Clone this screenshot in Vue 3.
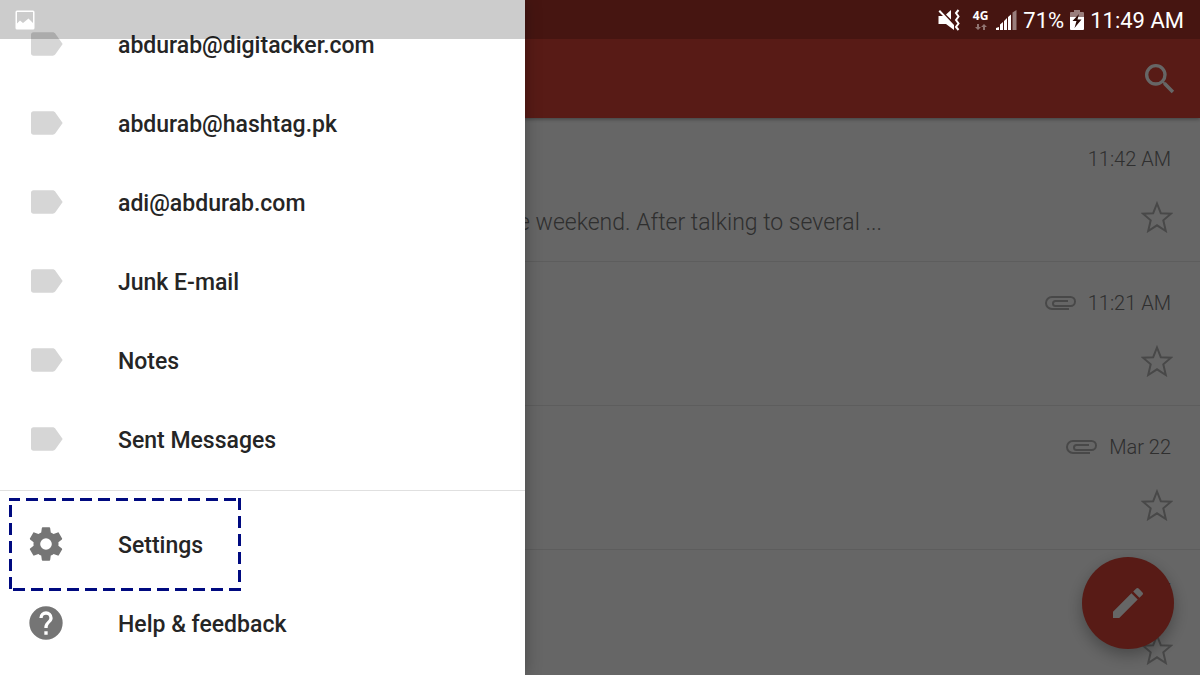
<script setup>
const labels = [
  'abdurab@digitacker.com',
  'abdurab@hashtag.pk',
  'adi@abdurab.com',
  'Junk E-mail',
  'Notes',
  'Sent Messages',
]

const mails = [
  { time: '11:42 AM', clip: false, snippet: 'the weekend. After talking to several ...' },
  { time: '11:21 AM', clip: true, snippet: '' },
  { time: 'Mar 22', clip: true, snippet: '' },
  { time: 'Mar 17', clip: false, snippet: '' },
]
</script>

<template>
  <div class="screen">
    <main class="app">
      <header class="toolbar">
        <button class="icon-button" type="button" aria-label="Search">
          <svg class="icon" viewBox="0 0 24 24">
            <path d="M15.5 14h-.79l-.28-.27A6.47 6.47 0 0 0 16 9.5 6.5 6.5 0 1 0 9.5 16c1.61 0 3.09-.59 4.23-1.57l.27.28v.79l5 4.99L20.49 19l-4.99-5zm-6 0a4.5 4.5 0 1 1 0-9 4.5 4.5 0 0 1 0 9z" />
          </svg>
        </button>
      </header>

      <ul class="mails">
        <li v-for="mail in mails" :key="mail.time" class="mail">
          <div class="meta">
            <svg v-if="mail.clip" class="clip" viewBox="0 0 31 14">
              <path d="M24 13H7A6 6 0 0 1 7 1H25.5A4.5 4.5 0 0 1 25.5 10H10.500a2.500 2.500 0 0 1 0-5H23" />
            </svg>
            <time>{{ mail.time }}</time>
          </div>
          <div class="line">
            <p class="snippet">{{ mail.snippet }}</p>
            <button class="icon-button" type="button" aria-label="Star">
              <svg class="star" viewBox="0 0 32 32">
                <path d="M16 2.500L19.800 12.200L30 12.700L22.300 19.300L24.800 30L16 24.300L7.200 30L9.700 19.300L2 12.700L12.200 12.200Z" />
              </svg>
            </button>
          </div>
        </li>
      </ul>

      <button class="fab" type="button" aria-label="Compose">
        <svg class="icon" viewBox="0 0 24 24">
          <path d="M3 17.250V21h3.750L17.810 9.940l-3.750-3.750L3 17.250zM20.710 7.040a1 1 0 0 0 0-1.410l-2.340-2.340a1 1 0 0 0-1.410 0l-1.830 1.830 3.750 3.750 1.830-1.830z" />
        </svg>
      </button>
    </main>

    <div class="scrim"></div>

    <nav class="drawer" aria-label="Folders">
      <div class="group">
        <a v-for="label in labels" :key="label" href="#" class="item">
          <svg class="icon pale" viewBox="0 0 24 24">
            <path d="M17.630 5.840C17.270 5.330 16.670 5 16 5H4.500C3.600 5 3 5.600 3 6.500v11C3 18.400 3.600 19 4.500 19H16c.67 0 1.270-.33 1.630-.84L22 12l-4.370-6.160z" />
          </svg>
          <span>{{ label }}</span>
        </a>
      </div>
      <div class="group footer">
        <a href="#" class="item">
          <svg class="icon" viewBox="0 0 24 24">
            <path d="M19.430 12.980c.04-.32.07-.64.07-.98s-.03-.66-.07-.98l2.110-1.650c.19-.15.24-.42.12-.64l-2-3.460c-.12-.22-.39-.3-.61-.22l-2.490 1c-.52-.4-1.080-.73-1.690-.98l-.38-2.650C14.460 2.180 14.250 2 14 2h-4c-.25 0-.46.18-.49.42l-.38 2.650c-.61.25-1.170.59-1.690.98l-2.490-1c-.23-.09-.49 0-.61.22l-2 3.460c-.13.22-.07.49.12.64l2.110 1.650c-.04.32-.07.65-.07.98s.03.66.07.98l-2.110 1.650c-.19.15-.24.42-.12.64l2 3.460c.12.22.39.3.61.22l2.490-1c.52.4 1.080.73 1.690.98l.38 2.650c.03.24.24.42.49.42h4c.25 0 .46-.18.49-.42l.38-2.650c.61-.25 1.170-.59 1.690-.98l2.490 1c.23.09.49 0 .61-.22l2-3.460c.12-.22.07-.49-.12-.64l-2.110-1.650zM12 15.500a3.500 3.500 0 1 1 0-7 3.500 3.500 0 0 1 0 7z" />
          </svg>
          <span>Settings</span>
          <svg class="marker" viewBox="0 0 232 93">
            <path d="M0 1.500H227" stroke-dashoffset="1" />
            <path d="M230.500 0V85" />
            <path d="M232 91.500H4" />
            <path d="M1.500 91V7" />
          </svg>
        </a>
        <a href="#" class="item">
          <svg class="icon" viewBox="0 0 24 24">
            <path d="M12 2a10 10 0 1 0 0 20 10 10 0 0 0 0-20zm1 17h-2v-2h2v2zm2.070-7.750l-.9.92C13.450 12.900 13 13.500 13 15h-2v-.5c0-1.100.45-2.100 1.170-2.830l1.240-1.260c.37-.36.59-.86.59-1.410a2 2 0 1 0-4 0H8a4 4 0 1 1 8 0c0 .88-.36 1.680-.93 2.250z" />
          </svg>
          <span>Help &amp; feedback</span>
        </a>
      </div>
    </nav>

    <div class="status">
      <svg class="photo" viewBox="0 0 20 20">
        <path fill-rule="evenodd" d="M2 .5H18A1.500 1.500 0 0 1 19.500 2V18A1.500 1.500 0 0 1 18 19.500H2A1.500 1.500 0 0 1 .5 18V2A1.500 1.500 0 0 1 2 .5ZM2 2V13.500L5 10.500L8 13L13.500 8.500L18 13V2Z" />
      </svg>
      <span class="spacer"></span>
      <svg class="mute" viewBox="0 0 23 22">
        <path d="M2 1L16 16V21L8 15H.5V7H5L.5 2.500ZM8 5.500L13 1V10.500Z" />
        <path class="stroke" d="M20.500 1L18 4L20.500 7.500L18 11L20.500 14.500L18 18L20.500 21" />
      </svg>
      <span class="network">
        <span>4G</span>
        <svg class="arrows" viewBox="0 0 12 6">
          <path d="M2 0H4V3H6L3 6L0 3H2ZM8 6H10V3H12L9 0L6 3H8Z" />
        </svg>
      </span>
      <svg class="signal" viewBox="0 0 21 20">
        <path d="M0 20V18L3 17V20ZM4 20V14.500L7 12V20ZM8 20V11L11 8V20ZM12 20V7L15 4.500V20Z" />
        <path class="dim" d="M16.500 20V2.500L20.500 0V20Z" />
      </svg>
      <span class="percent">71%</span>
      <svg class="battery" viewBox="0 0 14 20">
        <path class="dim" d="M4 0H10V2H13Q14 2 14 3V7H0V3Q0 2 1 2H4Z" />
        <path d="M0 7H14V19Q14 20 13 20H1Q0 20 0 19Z" />
        <path class="bolt" d="M9 4L2.500 11H6.500L4.500 18L11.500 9.500H7.500Z" />
      </svg>
      <time class="clock">11:49 AM</time>
    </div>
  </div>
</template>

<style>
body {
  margin: 0;
}
</style>

<style scoped>
.screen {
  display: grid;
  grid-template: minmax(0, 1fr) / minmax(0, 1fr);
  height: 100vh;
  overflow: hidden;
  font-family: Roboto, "Liberation Sans", sans-serif;
}
.app,
.scrim,
.drawer,
.status {
  grid-area: 1 / 1;
}
button {
  border: 0;
  padding: 0;
  background: none;
  color: inherit;
}
svg {
  display: block;
  flex: none;
}
.icon {
  width: 40px;
  height: 40px;
  fill: currentColor;
}
.icon-button {
  display: block;
}

.app {
  position: relative;
  overflow: hidden;
  background: #fff;
}
.toolbar {
  position: relative;
  display: flex;
  justify-content: flex-end;
  align-items: center;
  box-sizing: border-box;
  height: 118px;
  padding: 39px 20px 0;
  background: #db4437;
  color: #fff;
  box-shadow: 0 1px 4px rgba(0, 0, 0, 0.4);
}
.mails {
  margin: 0;
  padding: 0;
  list-style: none;
}
.mail {
  box-sizing: border-box;
  height: 144px;
  padding: 28px 27px 0 498px;
  border-bottom: 1px solid #e8e8e8;
  color: #757575;
  font-weight: 300;
}
.meta {
  display: flex;
  justify-content: flex-end;
  align-items: center;
  gap: 12px;
  height: 26px;
  padding-right: 2px;
  font-size: 20px;
}
.clip {
  width: 31px;
  height: 14px;
  fill: none;
  stroke: #b4b4b4;
  stroke-width: 2;
}
.line {
  display: flex;
  justify-content: space-between;
  align-items: center;
  height: 38px;
  margin-top: 26px;
}
.snippet {
  margin: 0;
  padding-top: 12px;
  font-size: 23px;
  line-height: 26px;
  white-space: nowrap;
}
.star {
  width: 32px;
  height: 32px;
  fill: none;
  stroke: #b4b4b4;
  stroke-width: 2;
}
.fab {
  position: absolute;
  right: 26px;
  bottom: 26px;
  display: grid;
  place-items: center;
  width: 92px;
  height: 92px;
  border-radius: 50%;
  background: #db4437;
  color: #fff;
  box-shadow: 0 6px 16px rgba(0, 0, 0, 0.3);
}

.scrim {
  position: relative;
  background: rgba(0, 0, 0, 0.6);
}

.drawer {
  position: relative;
  justify-self: start;
  box-sizing: border-box;
  width: 525px;
  max-width: 100%;
  padding-top: 4px;
  background: #fff;
  box-shadow: 0 0 16px rgba(0, 0, 0, 0.3);
}
.footer {
  margin-top: 12px;
  padding-top: 13px;
  border-top: 1px solid #e0e0e0;
}
.item {
  position: relative;
  display: flex;
  align-items: center;
  gap: 52px;
  height: 79px;
  padding-left: 26px;
  color: #757575;
  text-decoration: none;
}
.item span {
  padding-top: 4px;
  color: #252525;
  font-size: 23px;
  font-weight: 500;
  line-height: 28px;
}
.pale {
  color: #d6d6d6;
}
.marker {
  position: absolute;
  top: -6px;
  left: 9px;
  width: 232px;
  height: 93px;
  fill: none;
  stroke: #000a80;
  stroke-width: 3;
  stroke-dasharray: 12 6;
}

.status {
  position: relative;
  display: flex;
  align-items: center;
  align-self: start;
  box-sizing: border-box;
  height: 39px;
  padding: 0 16px 0 15px;
  background: rgba(0, 0, 0, 0.2);
  color: #fff;
  font-size: 22px;
}
.status svg {
  fill: #fff;
}
.spacer {
  flex: 1;
}
.photo {
  width: 20px;
  height: 20px;
}
.mute {
  width: 23px;
  height: 22px;
  margin-right: 12px;
}
.mute .stroke {
  fill: none;
  stroke: #fff;
  stroke-width: 2;
}
.network {
  display: flex;
  flex-direction: column;
  align-items: center;
  gap: 2px;
  margin-right: 8px;
  font: 700 12px/12px "Open Sans", sans-serif;
}
.arrows {
  width: 12px;
  height: 6px;
  opacity: 0.4;
}
.signal {
  width: 21px;
  height: 20px;
  margin-right: 6px;
}
.status .dim {
  opacity: 0.45;
}
.percent,
.clock {
  padding-top: 2px;
}
.percent {
  margin-right: 6px;
}
.battery {
  width: 14px;
  height: 20px;
  margin-right: 6px;
}
.battery .bolt {
  fill: #2a0a06;
}
</style>
